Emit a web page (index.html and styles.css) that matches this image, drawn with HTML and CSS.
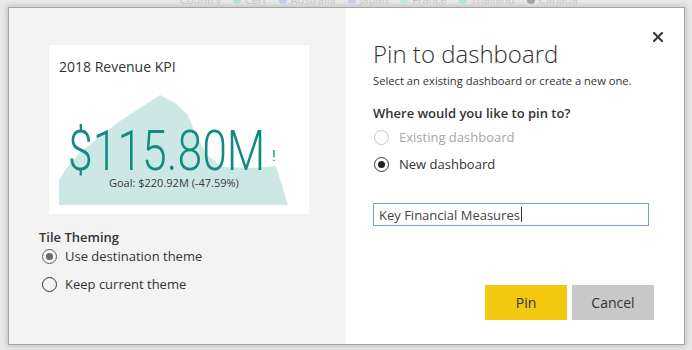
FILE: index.html
```html
<!DOCTYPE html>
<html lang="en">
<head>
<meta charset="utf-8">
<title>Pin to dashboard</title>
<link rel="stylesheet" href="styles.css">
</head>
<body>
<div class="backdrop">
  <div class="legend">
    <span class="legend-line">
      <span class="legend-title">Country</span>
      <span class="legend-item"><i class="ldot c1"></i>Cert</span>
      <span class="legend-item"><i class="ldot c2"></i>Australia</span>
      <span class="legend-item"><i class="ldot c3"></i>Japan</span>
      <span class="legend-item"><i class="ldot c4"></i>France</span>
      <span class="legend-item"><i class="ldot c5"></i>Thailand</span>
      <span class="legend-item"><i class="ldot c6"></i>Canada</span>
    </span>
  </div>
  <div class="dialog">
    <section class="preview">
      <div class="tile">
        <svg class="tile-chart" width="260" height="169" viewBox="0 0 260 169" aria-hidden="true">
          <path d="M10 160 L10 135 Q22 114 38 102 L68 78 L111 50 L126 58 L139 70 L146 88 L158 110 L173 122 L206 123 L227 121 L239 160 Z" fill="#cde7e4"/>
        </svg>
        <div class="tile-title">2018 Revenue KPI</div>
        <div class="kpi-row">
          <span class="kpi-value">$115.80M</span>
          <span class="kpi-flag">!</span>
        </div>
        <div class="kpi-goal">Goal: $220.92M (-47.59%)</div>
      </div>
      <div class="theming">
        <div class="group-label">Tile Theming</div>
        <div class="radio-row"><span class="radio checked muted"></span><span>Use destination theme</span></div>
        <div class="radio-row"><span class="radio"></span><span>Keep current theme</span></div>
      </div>
    </section>
    <section class="pin">
      <button class="close" aria-label="Close">
        <svg width="10" height="10" viewBox="0 0 10 10"><path d="M1 1 L9 9 M9 1 L1 9" stroke="#3c3c3c" stroke-width="2.2" stroke-linecap="square"/></svg>
      </button>
      <h1 class="pin-title">Pin to dashboard</h1>
      <p class="pin-sub">Select an existing dashboard or create a new one.</p>
      <div class="group-label question">Where would you like to pin to?</div>
      <div class="radio-row disabled"><span class="radio"></span><span>Existing dashboard</span></div>
      <div class="radio-row second"><span class="radio checked"></span><span>New dashboard</span></div>
      <div class="name-input"><span class="input-text">Key Financial Measures</span><span class="caret"></span></div>
      <div class="actions">
        <button class="btn btn-primary">Pin</button>
        <button class="btn btn-secondary">Cancel</button>
      </div>
    </section>
  </div>
</div>
</body>
</html>
```
FILE: styles.css
```css
html, body {
  margin: 0;
  padding: 0;
}
body {
  width: 692px;
  height: 350px;
  overflow: hidden;
  background: #e9e9e9;
  font-family: "Open Sans", "Noto Sans", sans-serif;
  color: #333;
}
.backdrop {
  width: 692px;
  height: 350px;
}
.legend {
  height: 7px;
  overflow: hidden;
  padding-left: 180px;
  color: #c6c6c6;
  font-size: 11px;
}
.legend-line {
  display: flex;
  align-items: center;
  gap: 12px;
  line-height: 12px;
  margin-top: -6px;
}
.legend-item {
  display: flex;
  align-items: center;
  gap: 4px;
}
.ldot {
  display: inline-block;
  width: 8px;
  height: 8px;
  border-radius: 50%;
}
.c1 { background: #b5e1dc; }
.c2 { background: #bfd0ea; }
.c3 { background: #d0caea; }
.c4 { background: #c8e6e1; }
.c5 { background: #b3e1db; }
.c6 { background: #a4a4a4; }

.dialog {
  margin-left: 8px;
  width: 675px;
  height: 336px;
  display: flex;
  border: 1px solid #a5a5a5;
  background: #fff;
  box-shadow: 0 0 6px 1px rgba(0, 0, 0, 0.18);
}

/* left side */
.preview {
  width: 337px;
  background: #f3f3f3;
  padding: 37px 0 0 30px;
  box-sizing: border-box;
}
.tile {
  position: relative;
  margin-left: 10px;
  width: 260px;
  height: 169px;
  background: #fff;
  box-sizing: border-box;
  padding: 12px 0 0 10px;
}
.tile-chart {
  position: absolute;
  left: 0;
  top: 0;
}
.tile-title {
  position: relative;
  font-size: 14px;
  line-height: 20px;
  color: #333;
}
.kpi-row {
  position: relative;
  display: flex;
  align-items: flex-start;
  margin-top: 50px;
  padding-left: 9px;
  height: 48px;
}
.kpi-value {
  display: block;
  width: 200px;
  height: 48px;
  font-family: Roboto, "Open Sans", sans-serif;
  font-weight: 300;
  font-size: 56px;
  line-height: 48px;
  color: #0f8b80;
  white-space: nowrap;
  transform: scaleX(0.795);
  transform-origin: left center;
}
.kpi-flag {
  margin-left: 4px;
  margin-top: 22px;
  font-family: Roboto, sans-serif;
  font-size: 14px;
  line-height: 14px;
  color: #0f8b80;
}
.kpi-goal {
  position: relative;
  margin-top: 1px;
  padding-left: 50px;
  font-size: 11px;
  line-height: 14px;
  color: #3a3a3a;
}
.theming {
  margin-top: 14px;
}
.group-label {
  font-size: 13px;
  line-height: 18px;
  font-weight: 600;
  color: #333;
}
.radio-row {
  display: flex;
  align-items: center;
  gap: 8px;
  height: 20px;
  font-size: 13px;
  color: #333;
}
.theming .radio-row + .radio-row {
  margin-top: 8px;
}
.radio {
  width: 13px;
  height: 13px;
  border: 1.5px solid #333;
  border-radius: 50%;
  display: flex;
  align-items: center;
  justify-content: center;
  flex: none;
  margin-left: 3px;
}
.radio.checked::after {
  content: "";
  width: 7px;
  height: 7px;
  border-radius: 50%;
  background: #222;
}
.radio.muted {
  border-color: #606060;
}
.radio.muted::after {
  background: #6a6a6a;
}

/* right side */
.pin {
  position: relative;
  flex: 1;
  padding: 30px 30px 0 27px;
  box-sizing: border-box;
}
.close {
  position: absolute;
  top: 24px;
  right: 21px;
  width: 10px;
  height: 10px;
  padding: 0;
  border: 0;
  background: none;
  display: block;
}
.close svg {
  display: block;
}
.pin-title {
  margin: 0;
  font-size: 24px;
  line-height: 32px;
  font-weight: 300;
  color: #333;
}
.pin-sub {
  margin: 3px 0 0;
  font-size: 11.2px;
  line-height: 16px;
  color: #333;
}
.question {
  margin-top: 15px;
}
.pin .radio-row {
  margin-top: 5px;
  gap: 10px;
}
.pin .radio-row .radio {
  margin-left: 1px;
}
.pin .radio-row.second {
  margin-top: 7px;
}
.radio-row.disabled {
  color: #a6a6a6;
}
.radio-row.disabled .radio {
  border-color: #c6c6c6;
}
.name-input {
  margin-top: 29px;
  width: 276px;
  height: 23px;
  box-sizing: border-box;
  border: 1px solid #7a9bd8;
  display: flex;
  align-items: center;
  padding-left: 5px;
  font-size: 13px;
  color: #444;
}
.caret {
  width: 1px;
  height: 15px;
  background: #333;
  margin-left: 1px;
}
.actions {
  margin-top: 59px;
  display: flex;
  justify-content: flex-end;
  gap: 5px;
}
.btn {
  width: 82px;
  height: 35px;
  border: 0;
  font-family: "Open Sans", "Noto Sans", sans-serif;
  font-size: 14px;
  color: #333;
  padding: 0;
}
.btn-primary {
  background: #f2c811;
}
.btn-secondary {
  background: #c8c8c8;
}
```
